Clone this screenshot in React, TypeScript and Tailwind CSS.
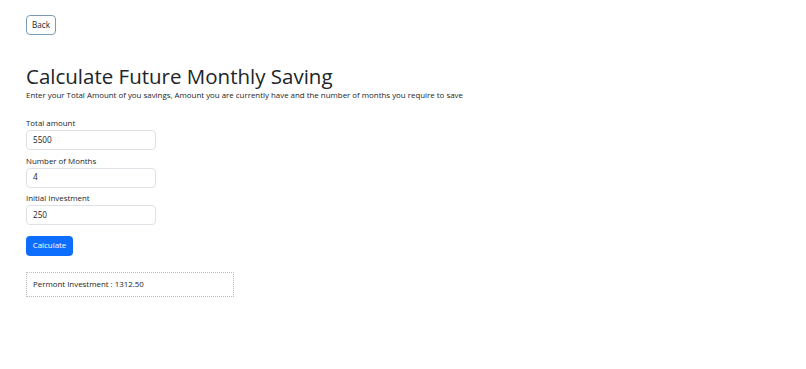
import React from "react";

export default function App() {
  return (
    <div className="min-h-[369px] w-full bg-white px-[26px] pt-[15px] text-[#212529]" style={{ fontFamily: '"Open Sans", "Noto Sans", sans-serif' }}>
      <button className="flex h-[20px] w-[30px] items-center justify-center rounded-[4px] border border-[#7a9bb8] text-[8.2px] text-[#212529]">
        Back
      </button>
      <h1 className="mt-[27px] text-[20.5px] leading-[28px] font-normal">Calculate Future Monthly Saving</h1>
      <p className="mt-[-1px] text-[7.9px] leading-[12px]">
        Enter your Total Amount of you savings, Amount you are currently have and the number of months you require to save
      </p>
      <div className="mt-[16px] flex flex-col">
        <label className="text-[7.9px] leading-[12px]">Total amount</label>
        <div className="mt-[1px] flex h-[20px] w-[130px] items-center rounded-[4px] border border-[#dee2e6] px-[6px] text-[8.2px]">5500</div>
        <label className="mt-[4.5px] text-[7.9px] leading-[12px]">Number of Months</label>
        <div className="mt-[1px] flex h-[20px] w-[130px] items-center rounded-[4px] border border-[#dee2e6] px-[6px] text-[8.2px]">4</div>
        <label className="mt-[4.5px] text-[7.9px] leading-[12px]">Initial Investment</label>
        <div className="mt-[1px] flex h-[20px] w-[130px] items-center rounded-[4px] border border-[#dee2e6] px-[6px] text-[8.2px]">250</div>
      </div>
      <button className="mt-[11px] flex h-[20px] w-[47px] items-center justify-center rounded-[4px] bg-[#0d6efd] text-[7.9px] text-white">
        Calculate
      </button>
      <div className="mt-[16px] flex h-[25px] w-[208px] items-center border border-dotted border-[#bdbdbd] px-[6px] text-[7.9px]">
        Permont Investment : 1312.50
      </div>
    </div>
  );
}
